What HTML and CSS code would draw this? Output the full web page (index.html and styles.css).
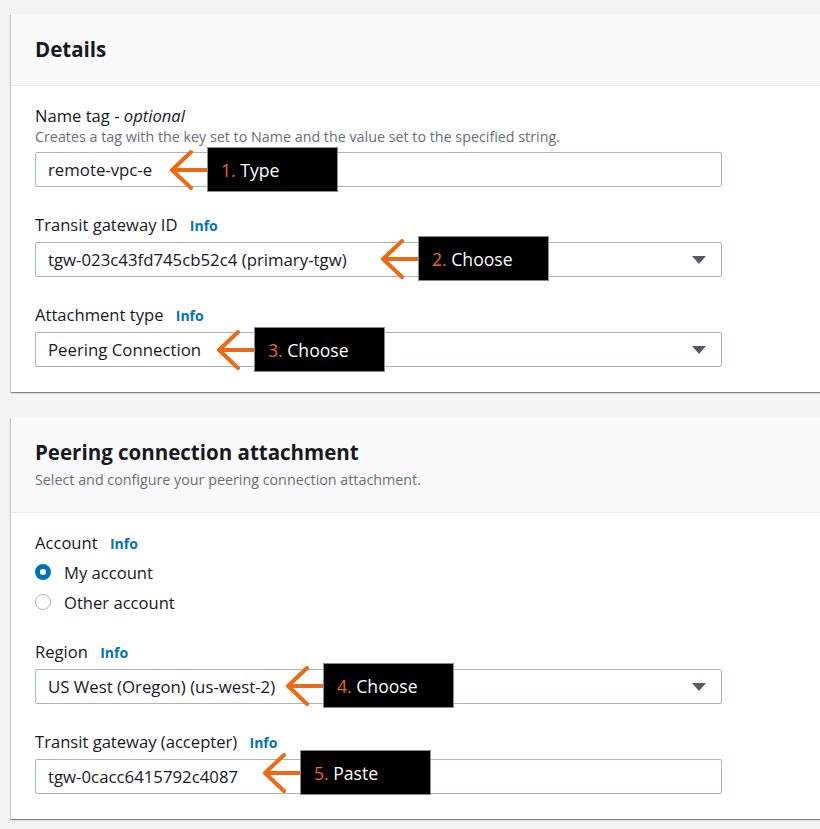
FILE: index.html
```html
<!DOCTYPE html>
<html lang="en">
<head>
<meta charset="utf-8">
<title>Create transit gateway attachment</title>
<link rel="stylesheet" href="styles.css">
</head>
<body>
<main class="page">
  <section class="card">
    <header class="card-header">
      <h2 class="card-title">Details</h2>
    </header>
    <div class="card-body">
      <div class="field">
        <div class="label">Name tag - <i>optional</i></div>
        <div class="desc">Creates a tag with the key set to Name and the value set to the specified string.</div>
        <div class="control">
          <div class="input">remote-vpc-e</div>
          <div class="ann ann-1">
            <svg class="arrow" viewBox="0 0 40 42" width="40" height="42"><path d="M3 21 L40 21 M22 3 L3 21 L22 39" fill="none" stroke="#ec6a12" stroke-width="4" stroke-linecap="round" stroke-linejoin="round"/></svg>
            <div class="ann-box"><span class="num">1.</span> Type</div>
          </div>
        </div>
      </div>
      <div class="field">
        <div class="label">Transit gateway ID <span class="info">Info</span></div>
        <div class="control">
          <div class="input select">tgw-023c43fd745cb52c4 (primary-tgw)<span class="caret"></span></div>
          <div class="ann ann-2">
            <svg class="arrow" viewBox="0 0 40 42" width="40" height="42"><path d="M3 21 L40 21 M22 3 L3 21 L22 39" fill="none" stroke="#ec6a12" stroke-width="4" stroke-linecap="round" stroke-linejoin="round"/></svg>
            <div class="ann-box"><span class="num">2.</span> Choose</div>
          </div>
        </div>
      </div>
      <div class="field">
        <div class="label">Attachment type <span class="info">Info</span></div>
        <div class="control">
          <div class="input select">Peering Connection<span class="caret"></span></div>
          <div class="ann ann-3">
            <svg class="arrow" viewBox="0 0 40 42" width="40" height="42"><path d="M3 21 L40 21 M22 3 L3 21 L22 39" fill="none" stroke="#ec6a12" stroke-width="4" stroke-linecap="round" stroke-linejoin="round"/></svg>
            <div class="ann-box"><span class="num">3.</span> Choose</div>
          </div>
        </div>
      </div>
    </div>
  </section>

  <section class="card">
    <header class="card-header">
      <h2 class="card-title">Peering connection attachment</h2>
      <p class="card-sub">Select and configure your peering connection attachment.</p>
    </header>
    <div class="card-body">
      <div class="field">
        <div class="label">Account <span class="info">Info</span></div>
        <div class="radios">
          <div class="radio-row"><span class="radio checked"></span>My account</div>
          <div class="radio-row"><span class="radio"></span>Other account</div>
        </div>
      </div>
      <div class="field">
        <div class="label">Region <span class="info">Info</span></div>
        <div class="control">
          <div class="input select">US West (Oregon) (us-west-2)<span class="caret"></span></div>
          <div class="ann ann-4">
            <svg class="arrow" viewBox="0 0 40 42" width="40" height="42"><path d="M3 21 L40 21 M22 3 L3 21 L22 39" fill="none" stroke="#ec6a12" stroke-width="4" stroke-linecap="round" stroke-linejoin="round"/></svg>
            <div class="ann-box"><span class="num">4.</span> Choose</div>
          </div>
        </div>
      </div>
      <div class="field">
        <div class="label">Transit gateway (accepter) <span class="info">Info</span></div>
        <div class="control">
          <div class="input">tgw-0cacc6415792c4087</div>
          <div class="ann ann-5">
            <svg class="arrow" viewBox="0 0 40 42" width="40" height="42"><path d="M3 21 L40 21 M22 3 L3 21 L22 39" fill="none" stroke="#ec6a12" stroke-width="4" stroke-linecap="round" stroke-linejoin="round"/></svg>
            <div class="ann-box"><span class="num">5.</span> Paste</div>
          </div>
        </div>
      </div>
    </div>
  </section>
</main>
</body>
</html>
```

FILE: styles.css
```css
html, body {
  margin: 0;
  padding: 0;
}
body {
  background: #f2f3f3;
  font-family: "Open Sans", "Noto Sans", sans-serif;
  color: #16191f;
  overflow: hidden;
  width: 820px;
  height: 829px;
}
.page {
  padding: 14px 0 0 11px;
  display: flex;
  flex-direction: column;
  gap: 25px;
}
.card {
  width: 840px;
  background: #fff;
  box-shadow: 0 1px 1px 0 rgba(0, 28, 36, 0.3), 1px 1px 1px 0 rgba(0, 28, 36, 0.15), -1px 1px 1px 0 rgba(0, 28, 36, 0.15);
}
.card-header {
  background: #fafafa;
  border-bottom: 1px solid #eaeded;
  padding: 22px 24px 23px;
}
.card-title {
  margin: 0;
  font-size: 20.5px;
  line-height: 26px;
  height: 26px;
  font-weight: 700;
  color: #16191f;
}
.card-sub {
  margin: 6px 0 0;
  font-size: 14.3px;
  line-height: 18px;
  height: 18px;
  color: #687078;
}
.card-body {
  padding: 20px 24px 25px;
  display: flex;
  flex-direction: column;
  gap: 28px;
}
.label {
  font-size: 16.6px;
  line-height: 20px;
  height: 20px;
  color: #16191f;
  white-space: nowrap;
}
.label i {
  font-style: italic;
}
.info {
  font-size: 14px;
  font-weight: 700;
  color: #0073bb;
  margin-left: 8px;
}
.desc {
  font-size: 14.3px;
  line-height: 16px;
  height: 16px;
  color: #687078;
  margin-top: 3px;
  white-space: nowrap;
}
.control {
  position: relative;
  width: 687px;
  margin-top: 7px;
}
.input {
  box-sizing: border-box;
  height: 35px;
  border: 1px solid #aab7b8;
  border-radius: 2px;
  padding: 0 12px;
  display: flex;
  align-items: center;
  font-size: 16.8px;
  color: #16191f;
  background: #fff;
}
.select {
  justify-content: space-between;
}
.caret {
  width: 0;
  height: 0;
  border-left: 7px solid transparent;
  border-right: 7px solid transparent;
  border-top: 8px solid #545b64;
  margin-right: 3px;
}
.radios {
  margin: 4px 0 -3px;
  display: flex;
  flex-direction: column;
}
.radio-row {
  display: flex;
  align-items: center;
  height: 30px;
  font-size: 16.6px;
  color: #16191f;
}
.radio {
  box-sizing: border-box;
  width: 16px;
  height: 16px;
  border-radius: 50%;
  border: 1.5px solid #aab7b8;
  margin-right: 13px;
  background: #fff;
}
.radio.checked {
  border: 5px solid #0073bb;
}
.ann {
  position: absolute;
  display: flex;
  align-items: center;
}
.arrow {
  display: block;
  margin-right: -2px;
}
.ann-box {
  box-sizing: border-box;
  width: 131px;
  height: 45px;
  background: #000;
  border: 1px solid #8c8c8c;
  color: #fff;
  font-size: 17.6px;
  display: flex;
  align-items: center;
  padding-left: 13px;
  white-space: pre;
}
.num {
  color: #ec6a12;
}
.ann-1 { left: 134px; top: -5px; }
.ann-2 { left: 345px; top: -6px; }
.ann-3 { left: 181px; top: -5px; }
.ann-4 { left: 250px; top: -6px; }
.ann-5 { left: 227px; top: -9px; }
```
